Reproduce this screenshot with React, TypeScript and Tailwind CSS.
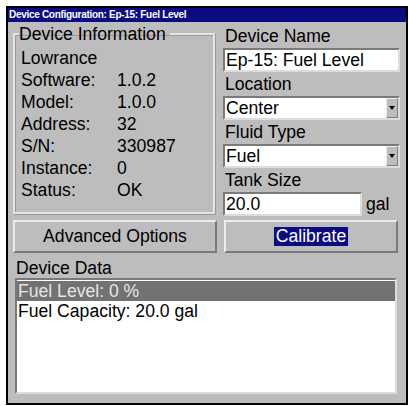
import React from "react";

const font = { fontFamily: '"Liberation Sans", Arial, sans-serif' };

const info = [
  ["Software:", "1.0.2"],
  ["Model:", "1.0.0"],
  ["Address:", "32"],
  ["S/N:", "330987"],
  ["Instance:", "0"],
  ["Status:", "OK"],
];

function Sunken({ children, className = "" }: { children?: React.ReactNode; className?: string }) {
  return (
    <div
      className={`border-2 border-t-[#7a7a7a] border-l-[#7a7a7a] border-b-[#dcdcdc] border-r-[#dcdcdc] bg-white ${className}`}
    >
      {children}
    </div>
  );
}

function Select({ value }: { value: string }) {
  return (
    <Sunken className="flex h-[24px] items-stretch">
      <span className="flex-1 pl-[1px] leading-[20px]">{value}</span>
      <span className="flex w-[12px] items-center justify-center border border-t-[#ececec] border-l-[#ececec] border-b-[#808080] border-r-[#808080] bg-[#bdbdbd]">
        <svg width="6" height="4" viewBox="0 0 6 4">
          <path d="M0 0h6L3 4z" fill="#000" />
        </svg>
      </span>
    </Sunken>
  );
}

export default function App() {
  return (
    <div className="h-[406px] w-[409px] bg-white pl-[6px] pt-[6px] text-[17.6px] text-black" style={font}>
      <div className="flex h-[399px] w-[402px] flex-col border-2 border-black bg-[#bdbdbd]">
        <div className="h-[14px] bg-[#0b0b82] pl-[1px] text-[10px] font-bold leading-[14px] tracking-[-0.3px] text-white">
          Device Configuration: Ep-15: Fuel Level
        </div>

        <div className="flex gap-[6px] px-[5px] pt-[2px]">
          {/* left column */}
          <div className="flex w-[204px] flex-col">
            <fieldset className="mr-[2px] border-2 border-[#e4e4e4] pb-[11px] pl-[6px] shadow-[inset_1px_1px_0_#9a9a9a,1px_1px_0_#9a9a9a]">
              <legend className="-ml-[2px] pr-[4px] leading-[20px]">Device Information</legend>
              <div className="mt-[3px] leading-[22px]">
                <div>Lowrance</div>
                {info.map(([k, v]) => (
                  <div key={k} className="grid grid-cols-[96px_1fr]">
                    <span>{k}</span>
                    <span>{v}</span>
                  </div>
                ))}
              </div>
            </fieldset>
          </div>

          {/* right column */}
          <div className="flex w-[177px] flex-col leading-[24px]">
            <div className="pl-[2px]">Device Name</div>
            <Sunken className="h-[24px] pl-[1px] leading-[20px]">Ep-15: Fuel Level</Sunken>
            <div className="pl-[2px]">Location</div>
            <Select value="Center" />
            <div className="pl-[2px]">Fluid Type</div>
            <Select value="Fuel" />
            <div className="pl-[2px]">Tank Size</div>
            <div className="flex items-center">
              <Sunken className="h-[24px] w-[139px] pl-[1px] leading-[20px]">20.0</Sunken>
              <span className="ml-[4px] leading-[24px]">gal</span>
            </div>
          </div>
        </div>

        <div className="mt-[4px] flex gap-[7px] px-[5px]">
          <button className="h-[33px] w-[204px] border-2 border-t-[#ececec] border-l-[#ececec] border-b-[#7a7a7a] border-r-[#7a7a7a]">
            Advanced Options
          </button>
          <button className="flex h-[33px] w-[174px] items-center justify-center border-2 border-t-[#ececec] border-l-[#ececec] border-b-[#7a7a7a] border-r-[#7a7a7a]">
            <span className="bg-[#0b0b82] px-[2px] leading-[19px] text-white">Calibrate</span>
          </button>
        </div>

        <div className="mt-[5px] pl-[8px] leading-[20px]">Device Data</div>
        <div className="px-[7px]">
          <Sunken className="h-[116px] w-[382px] pt-[1px] leading-[20px]">
            <div className="bg-[#727272] pl-[1px] text-[#e6e6e6]">Fuel Level: 0 %</div>
            <div className="pl-[1px]">Fuel Capacity: 20.0 gal</div>
          </Sunken>
        </div>
      </div>
    </div>
  );
}
